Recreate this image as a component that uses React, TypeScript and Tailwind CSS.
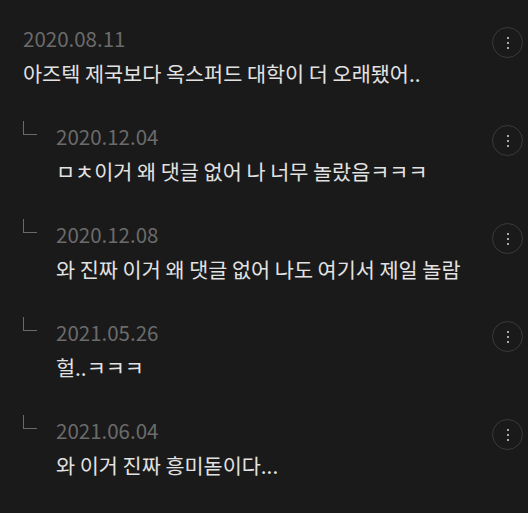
import React from "react";

type C = { date: string; text: string; reply: boolean };

const comments: C[] = [
  { date: "2020.08.11", text: "아즈텍 제국보다 옥스퍼드 대학이 더 오래됐어..", reply: false },
  { date: "2020.12.04", text: "ㅁㅊ이거 왜 댓글 없어 나 너무 놀랐음ㅋㅋㅋ", reply: true },
  { date: "2020.12.08", text: "와 진짜 이거 왜 댓글 없어 나도 여기서 제일 놀람", reply: true },
  { date: "2021.05.26", text: "헐..ㅋㅋㅋ", reply: true },
  { date: "2021.06.04", text: "와 이거 진짜 흥미돋이다...", reply: true },
];

function Kebab() {
  return (
    <div className="w-[31px] h-[31px] rounded-full border border-[#3a3a3a] flex flex-col items-center justify-center gap-[3px] shrink-0">
      <span className="w-[2px] h-[2px] bg-[#a8a8a8]" />
      <span className="w-[2px] h-[2px] bg-[#a8a8a8]" />
      <span className="w-[2px] h-[2px] bg-[#a8a8a8]" />
    </div>
  );
}

export default function App() {
  return (
    <div
      className="w-[528px] h-[513px] bg-[#1a1a1a] pt-[27px] overflow-hidden"
      style={{ fontFamily: '"Noto Sans CJK KR", "Noto Sans", sans-serif' }}
    >
      {comments.map((c, i) => (
        <div key={i} className="flex items-start pr-[5px] h-[98px]">
          {c.reply ? (
            <div className="flex w-[56px] pl-[23px] shrink-0">
              <div className="w-[14px] h-[14px] mt-[-4px] border-l border-b border-[#6a6a6a]" />
            </div>
          ) : (
            <div className="w-[23px] shrink-0" />
          )}
          <div className="flex-1 min-w-0 mt-[-2px]">
            <div className="text-[20.5px] leading-[26px] text-[#6b6b6b]">{c.date}</div>
            <div className="text-[20.75px] leading-[26px] text-[#e2e2e2] mt-[9px]">{c.text}</div>
          </div>
          <Kebab />
        </div>
      ))}
    </div>
  );
}
